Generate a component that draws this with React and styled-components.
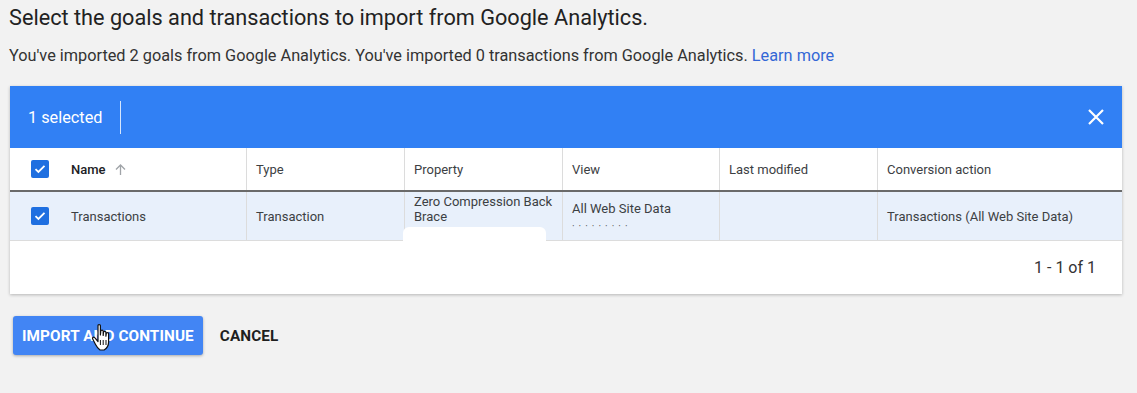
import React from "react";
import styled, { createGlobalStyle } from "styled-components";

const GlobalStyle = createGlobalStyle`
  html, body {
    margin: 0;
    padding: 0;
    background: #f2f2f2;
    font-family: Roboto, "Liberation Sans", Arial, sans-serif;
    color: #202124;
  }
`;

const Page = styled.div`
  position: relative;
  width: 1137px;
  height: 393px;
  padding: 4px 0 0 9px;
  box-sizing: border-box;
  overflow: hidden;
`;

const Title = styled.h1`
  margin: 0;
  font-size: 21.7px;
  font-weight: 400;
  line-height: 28px;
  color: #222;
`;

const Intro = styled.p`
  margin: 13px 0 0;
  font-size: 16.3px;
  line-height: 22px;
  color: #333;
`;

const Link = styled.a`
  color: #3367d6;
  text-decoration: none;
`;

const Card = styled.div`
  position: relative;
  margin: 19px 0 0 1px;
  width: 1112px;
  background: #fff;
  box-shadow: 0 1px 3px rgba(0, 0, 0, 0.25);
`;

const SelectionBar = styled.div`
  display: flex;
  align-items: center;
  height: 62px;
  padding: 0 17px 0 18px;
  background: #3180f4;
  color: #fff;
`;

const SelectedCount = styled.span`
  font-size: 16.3px;
  padding-right: 18px;
  border-right: 1px solid rgba(255, 255, 255, 0.8);
  line-height: 33px;
`;

const CloseButton = styled.button`
  margin-left: auto;
  display: flex;
  border: 0;
  padding: 0;
  background: none;
  color: #fff;
  cursor: pointer;
`;

const Row = styled.div`
  display: grid;
  grid-template-columns: 237px 158px 158px 157px 158px 1fr;
  height: ${(p) => (p.$head ? "42px" : "48px")};
  background: ${(p) => (p.$selected ? "#e8f0fb" : "#fff")};
  border-bottom: ${(p) => (p.$head ? "2px solid #6a6a6a" : "1px solid #dcdcdc")};
  overflow: hidden;
`;

const Cell = styled.div`
  display: flex;
  flex-direction: column;
  justify-content: ${(p) => (p.$top ? "flex-start" : "center")};
  padding: ${(p) => (p.$top ? "2px 9px 0" : "0 9px")};
  border-right: 1px solid #dcdcdc;
  font-size: 13px;
  line-height: 15px;
  font-weight: ${(p) => (p.$bold ? 500 : 400)};
  color: ${(p) => (p.$bold ? "#202124" : "#3c4043")};
  &:last-child {
    border-right: 0;
  }
`;

const NameCell = styled(Cell)`
  flex-direction: row;
  align-items: center;
  justify-content: flex-start;
  padding-left: 21px;
  gap: 22px;
`;

const Check = styled.span`
  display: inline-flex;
  align-items: center;
  justify-content: center;
  width: 18px;
  height: 18px;
  border-radius: 2px;
  background: #1f6fe0;
`;

const SortArrow = styled.span`
  display: inline-flex;
  vertical-align: -2px;
  margin-left: 8px;
  color: #9aa0a6;
`;

const IdLine = styled.span`
  margin-top: 3px;
  color: #555;
  letter-spacing: 4px;
  font-size: 10px;
`;

const Footer = styled.div`
  display: flex;
  justify-content: flex-end;
  align-items: center;
  height: 53px;
  padding-right: 26px;
  font-size: 16px;
  color: #333;
`;

const Redaction = styled.div`
  position: absolute;
  left: 393px;
  top: 141px;
  width: 143px;
  height: 19px;
  background: #fff;
  border-radius: 6px 6px 0 0;
`;

const Actions = styled.div`
  display: flex;
  align-items: center;
  gap: 17px;
  margin: 22px 0 0 4px;
`;

const Button = styled.button`
  height: 39px;
  padding: 0 ${(p) => (p.$primary ? "9px" : "0")};
  border: 0;
  border-radius: 3px;
  font-family: inherit;
  font-size: 15.3px;
  font-weight: 700;
  letter-spacing: 0.1px;
  background: ${(p) => (p.$primary ? "#4285f4" : "transparent")};
  color: ${(p) => (p.$primary ? "#fff" : "#1f1f1f")};
  box-shadow: ${(p) => (p.$primary ? "0 1px 3px rgba(0,0,0,0.3)" : "none")};
  cursor: pointer;
`;

const Pointer = styled.svg`
  position: absolute;
  left: 91px;
  top: 323px;
`;

function CheckMark() {
  return (
    <Check>
      <svg width="12" height="10" viewBox="0 0 12 10">
        <path d="M1.5 5.2 4.4 8 10.5 1.8" fill="none" stroke="#fff" strokeWidth="1.8" />
      </svg>
    </Check>
  );
}

const columns = ["Type", "Property", "View", "Last modified", "Conversion action"];

export default function App() {
  return (
    <>
      <GlobalStyle />
      <Page>
        <Title>Select the goals and transactions to import from Google Analytics.</Title>
        <Intro>
          You've imported 2 goals from Google Analytics. You've imported 0 transactions from Google
          Analytics. <Link href="#">Learn more</Link>
        </Intro>
        <Card>
          <SelectionBar>
            <SelectedCount>1 selected</SelectedCount>
            <CloseButton aria-label="Clear selection">
              <svg width="18" height="18" viewBox="0 0 18 18">
                <path d="M2 2 16 16M16 2 2 16" stroke="#fff" strokeWidth="2.2" />
              </svg>
            </CloseButton>
          </SelectionBar>
          <Row $head>
            <NameCell $bold>
              <CheckMark />
              <span>
                Name
                <SortArrow>
                  <svg width="13" height="13" viewBox="0 0 13 13">
                    <path d="M6.5 12V2M2 6.5l4.5-4.5 4.5 4.5" fill="none" stroke="#a0a4a8" strokeWidth="1.3" />
                  </svg>
                </SortArrow>
              </span>
            </NameCell>
            {columns.map((c) => (
              <Cell key={c}>{c}</Cell>
            ))}
          </Row>
          <Row $selected>
            <NameCell>
              <CheckMark />
              <span>Transactions</span>
            </NameCell>
            <Cell>Transaction</Cell>
            <Cell $top>
              <span>Zero Compression Back</span>
              <span>Brace</span>
            </Cell>
            <Cell $top style={{ paddingTop: 9 }}>
              <span>All Web Site Data</span>
              <IdLine>·········</IdLine>
            </Cell>
            <Cell />
            <Cell>Transactions (All Web Site Data)</Cell>
          </Row>
          <Footer>1 - 1 of 1</Footer>
          <Redaction />
        </Card>
        <Actions>
          <Button $primary>IMPORT AND CONTINUE</Button>
          <Button>CANCEL</Button>
        </Actions>
        <Pointer width="22" height="30" viewBox="0 0 22 30">
          <path
            d="M7 2.5c0-1.2 2.4-1.2 2.4 0v9.5l.4-4c0-1.2 2.4-1.2 2.4 0v4.5l.3-3.3c0-1.2 2.4-1.2 2.4 0v4l.4-2.6c0-1.2 2.3-1.2 2.3 0V19c0 3.5-2 6.5-4.5 8H9c-2-1.6-3.5-3.6-4.6-5.8L1.6 15.8c-.6-1.2 1.2-2.2 2.1-1.1L7 18.5z"
            fill="#fff"
            stroke="#111"
            strokeWidth="1.2"
            strokeLinejoin="round"
          />
          <path d="M9.4 17v5M12.2 17v5M15 17v5" stroke="#111" strokeWidth="1" />
        </Pointer>
      </Page>
    </>
  );
}
